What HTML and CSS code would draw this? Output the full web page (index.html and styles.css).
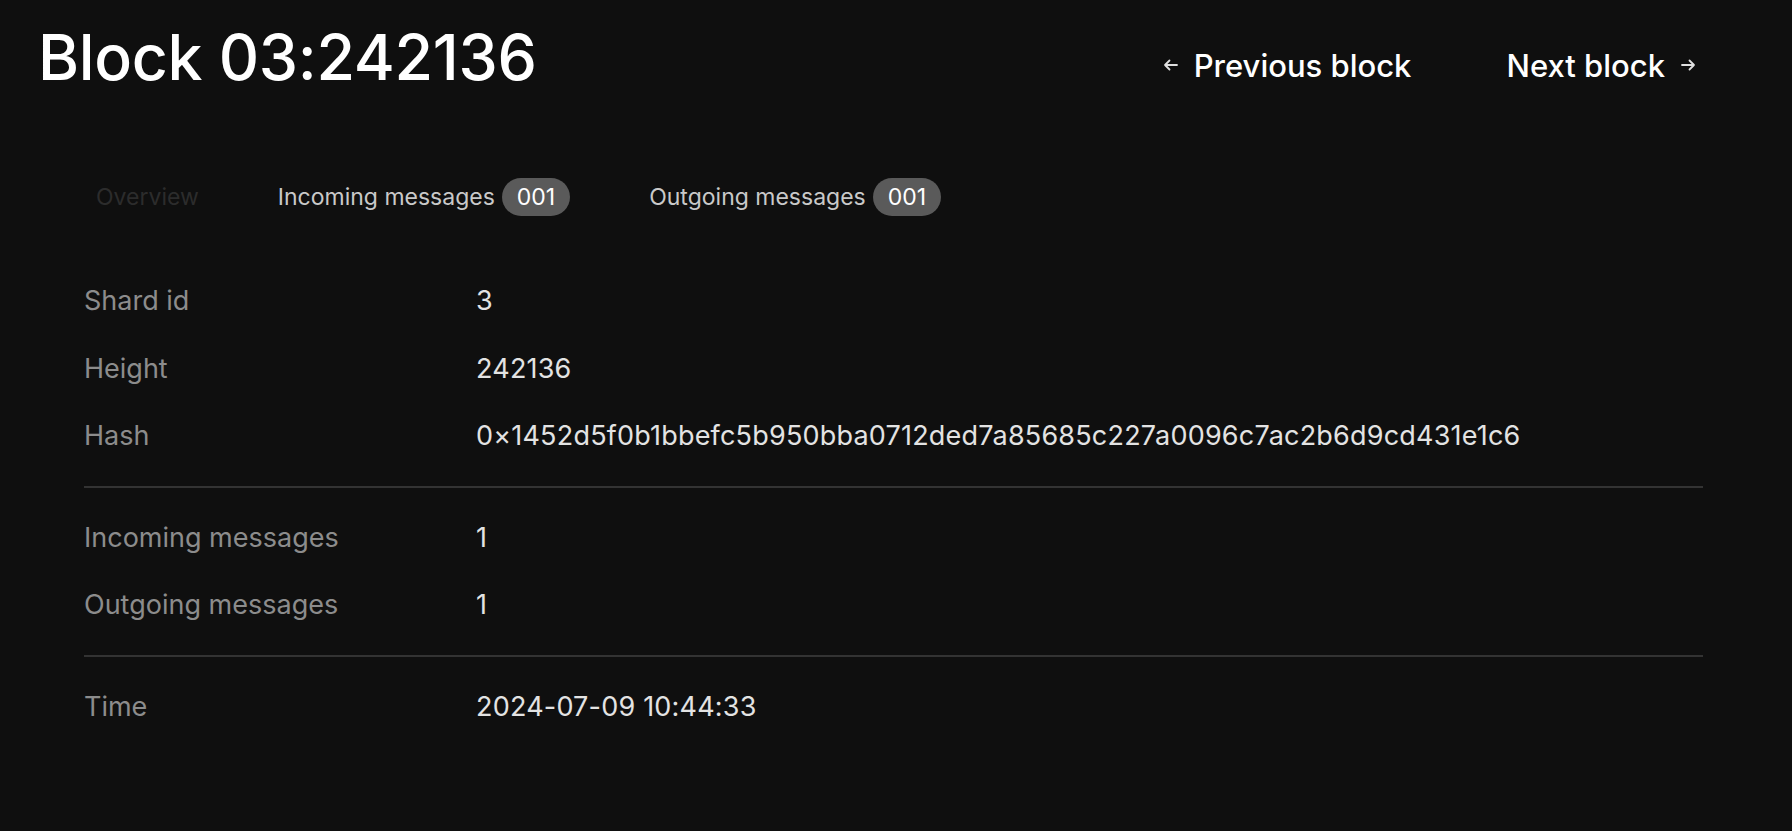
FILE: index.html
```html
<!DOCTYPE html>
<html lang="en">
<head>
<meta charset="utf-8">
<title>Block 03:242136</title>
<link rel="stylesheet" href="styles.css">
</head>
<body>
<div class="page">
  <header class="header">
    <h1 class="title">Block 03:242136</h1>
    <nav class="pager">
      <a class="pager-link prev" href="#">
        <svg class="arrow" width="15" height="12" viewBox="0 0 15 12"><path d="M14 6H2M6.5 1.5L2 6l4.5 4.5" fill="none" stroke="currentColor" stroke-width="1.8" stroke-linecap="round" stroke-linejoin="round"/></svg>
        <span>Previous block</span>
      </a>
      <a class="pager-link next" href="#">
        <span>Next block</span>
        <svg class="arrow" width="15" height="12" viewBox="0 0 15 12"><path d="M1 6h12M8.5 1.5L13 6l-4.5 4.5" fill="none" stroke="currentColor" stroke-width="1.8" stroke-linecap="round" stroke-linejoin="round"/></svg>
      </a>
    </nav>
  </header>

  <div class="tabs">
    <div class="tab active">Overview</div>
    <div class="tab">Incoming messages <span class="badge">001</span></div>
    <div class="tab">Outgoing messages <span class="badge">001</span></div>
  </div>

  <div class="details">
    <div class="section">
      <div class="row"><div class="label">Shard id</div><div class="value">3</div></div>
      <div class="row"><div class="label">Height</div><div class="value">242136</div></div>
      <div class="row"><div class="label">Hash</div><div class="value">0×1452d5f0b1bbefc5b950bba0712ded7a85685c227a0096c7ac2b6d9cd431e1c6</div></div>
    </div>
    <div class="section">
      <div class="row"><div class="label">Incoming messages</div><div class="value">1</div></div>
      <div class="row"><div class="label">Outgoing messages</div><div class="value">1</div></div>
    </div>
    <div class="section">
      <div class="row"><div class="label">Time</div><div class="value">2024-07-09 10:44:33</div></div>
    </div>
  </div>
</div>
</body>
</html>
```

FILE: styles.css
```css
html, body {
  margin: 0;
  padding: 0;
  background: #0f0f0f;
  font-family: Inter, "Noto Sans", sans-serif;
  color: #e6e6e6;
}

.page {
  padding: 0 40px 0 38px;
}

.header {
  display: flex;
  align-items: center;
  justify-content: space-between;
  height: 114px;
}

.title {
  margin: 0;
  font-size: 62.6px;
  font-weight: 500;
  color: #ffffff;
  letter-spacing: -0.3px;
}

.pager {
  display: flex;
  align-items: center;
  gap: 95px;
  margin-right: 56px;
  padding-top: 16px;
}

.pager-link {
  display: flex;
  align-items: center;
  gap: 16px;
  color: #ffffff;
  text-decoration: none;
  font-size: 31px;
  font-weight: 500;
}

.arrow {
  color: #e0e0e0;
}

.tabs {
  display: flex;
  align-items: center;
  height: 64px;
  margin-top: 51px;
  padding-left: 58px;
  gap: 79px;
}

.tab {
  display: flex;
  align-items: center;
  gap: 7px;
  font-size: 23px;
  color: #c9c9c9;
}

.tab.active {
  color: #2c2c2c;
}

.badge {
  display: inline-flex;
  align-items: center;
  justify-content: center;
  height: 38px;
  padding: 0 15px;
  border-radius: 19px;
  background: #5a5a5a;
  color: #ffffff;
  font-size: 23px;
}

.details {
  margin: 38px 49px 0 46px;
}

.section {
  padding: 16px 0;
  border-bottom: 2px solid #333333;
}

.section:first-child {
  padding-top: 0;
}

.section:last-child {
  border-bottom: none;
}

.row {
  display: flex;
  align-items: center;
  height: 67.5px;
  font-size: 27px;
}

.label {
  width: 392px;
  flex: none;
  color: #8c8c8c;
}

.value {
  color: #e3e3e3;
  letter-spacing: 0.2px;
}
```
